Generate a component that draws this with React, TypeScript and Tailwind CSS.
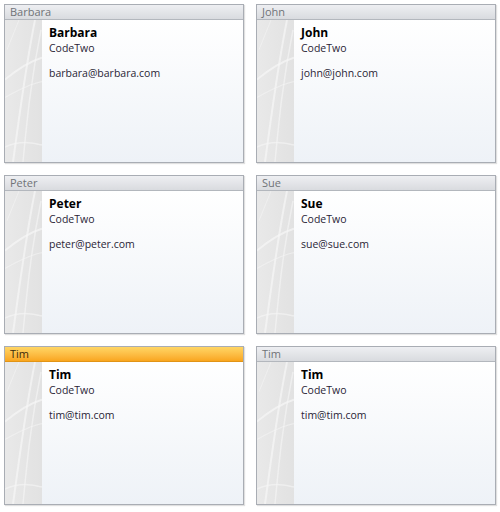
import React from "react";

type Contact = { name: string; company: string; email: string; selected?: boolean };

const CONTACTS: Contact[] = [
  { name: "Barbara", company: "CodeTwo", email: "barbara@barbara.com" },
  { name: "John", company: "CodeTwo", email: "john@john.com" },
  { name: "Peter", company: "CodeTwo", email: "peter@peter.com" },
  { name: "Sue", company: "CodeTwo", email: "sue@sue.com" },
  { name: "Tim", company: "CodeTwo", email: "tim@tim.com", selected: true },
  { name: "Tim", company: "CodeTwo", email: "tim@tim.com" },
];

function StripArt() {
  return (
    <svg className="absolute inset-0 h-full w-full" viewBox="0 0 37 143" preserveAspectRatio="none">
      <path d="M8 143 C14 100 20 50 30 0" stroke="#f7f7f7" strokeWidth="2" fill="none" opacity="0.7" />
      <path d="M18 143 C22 100 26 60 36 10" stroke="#f7f7f7" strokeWidth="1.5" fill="none" opacity="0.6" />
      <path d="M0 60 C12 50 24 42 37 38" stroke="#f7f7f7" strokeWidth="2" fill="none" opacity="0.7" />
      <path d="M0 78 C14 70 26 64 37 62" stroke="#f7f7f7" strokeWidth="1.2" fill="none" opacity="0.5" />
      <path d="M0 128 C12 122 24 122 37 126" stroke="#f7f7f7" strokeWidth="1.5" fill="none" opacity="0.6" />
      <path d="M2 30 C6 20 10 10 14 0" stroke="#f7f7f7" strokeWidth="1" fill="none" opacity="0.5" />
    </svg>
  );
}

function ContactCard({ contact }: { contact: Contact }) {
  return (
    <div className="flex h-[159px] flex-col border border-[#a9adb4] shadow-[1px_1px_1px_rgba(0,0,0,0.12)]">
      <div
        className={
          contact.selected
            ? "h-[15px] border-b border-[#e19416] bg-gradient-to-b from-[#ffd664] to-[#f9a61c] pl-[5px] text-[11px] leading-[14px] text-[#3b2b0b]"
            : "h-[15px] border-b border-[#b3b7bd] bg-gradient-to-b from-[#eeeff2] to-[#d9dbdf] pl-[5px] text-[11px] leading-[14px] text-[#707377]"
        }
      >
        {contact.name}
      </div>
      <div className="flex flex-1 bg-gradient-to-b from-white to-[#eef2f7]">
        <div className="relative w-[37px] overflow-hidden bg-gradient-to-r from-[#e9e9e9] to-[#e2e2e2]">
          <StripArt />
        </div>
        <div className="flex flex-col pl-[7px] pt-[5px] text-[10.5px] leading-[15px] text-[#2a2536]">
          <span className="text-[12px] font-bold leading-[16px] text-black">{contact.name}</span>
          <span>{contact.company}</span>
          <span className="mt-[10px]">{contact.email}</span>
        </div>
      </div>
    </div>
  );
}

export default function App() {
  return (
    <div
      className="h-[512px] w-[500px] bg-white"
      style={{ fontFamily: '"Open Sans", "Noto Sans", sans-serif' }}
    >
      <div className="grid grid-cols-[240px_240px] gap-x-[12px] gap-y-[12px] pl-[4px] pt-[4px]">
        {CONTACTS.map((c, i) => (
          <ContactCard key={i} contact={c} />
        ))}
      </div>
    </div>
  );
}
